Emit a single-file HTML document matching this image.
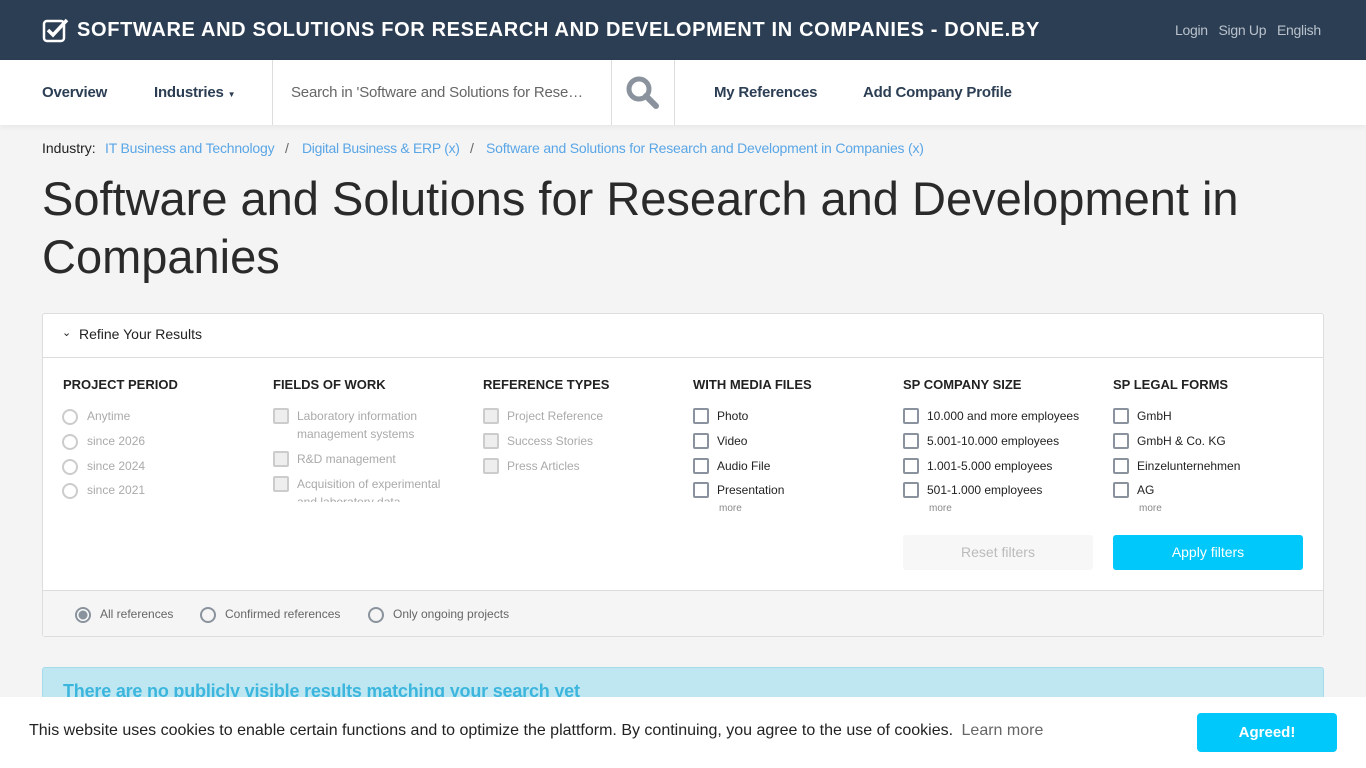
<!DOCTYPE html>
<html><head><meta charset="utf-8"><style>
*{box-sizing:border-box;margin:0;padding:0}
body{width:1366px;height:768px;overflow:hidden;background:#f4f4f4;font-family:"Liberation Sans",sans-serif;position:relative;color:#222}
.a{position:absolute;white-space:nowrap}
#top{position:absolute;left:0;top:0;width:1366px;height:60px;background:#2c3e53}
#nav{position:absolute;left:0;top:60px;width:1366px;height:65px;background:#fff;box-shadow:0 2px 6px rgba(0,0,0,.06)}
.nv{font-size:15px;color:#2c3e53;top:24px;font-weight:bold;letter-spacing:-.2px}
.vl{position:absolute;top:0;width:1px;height:65px;background:#ddd}
.bc{font-size:14px;color:#5aa6e6;top:140px}
#panel{position:absolute;left:42px;top:313px;width:1282px;height:324px;background:#fff;border:1px solid #ddd;border-radius:3px}
.hd{font-size:13px;font-weight:bold;color:#222;top:377px}
.it{font-size:12px;color:#222}
.dis{color:#aaa}
.cb{position:absolute;width:16px;height:16px;border:2px solid #8a939d;border-radius:2px}
.cbd{border-color:#ccc;background:#eee}
.rd{position:absolute;width:16px;height:16px;border:2px solid #ccc;border-radius:50%}
.more{font-size:10px;color:#888}
</style></head><body>
<div id="top"></div>
<svg class="a" style="left:42px;top:17px" width="28" height="26" viewBox="0 0 28 26"><rect x="2" y="4" width="20" height="20" rx="3" fill="none" stroke="#fff" stroke-width="2.5"/><path d="M6 13l5 5L25 3" fill="none" stroke="#fff" stroke-width="3.5"/></svg>
<div class="a" style="left:77px;top:19px;font-size:20px;font-weight:bold;color:#fff;letter-spacing:.65px">SOFTWARE AND SOLUTIONS FOR RESEARCH AND DEVELOPMENT IN COMPANIES - DONE.BY</div>
<div class="a" style="left:1175px;top:22px;font-size:14px;color:#b9c2cc;letter-spacing:-.3px">Login&nbsp;&nbsp;&nbsp;Sign Up&nbsp;&nbsp;&nbsp;English</div>
<div id="nav">
<div class="a nv" style="left:42px">Overview</div>
<div class="a nv" style="left:154px">Industries <span style="font-size:8px">▼</span></div>
<div class="vl" style="left:272px"></div>
<div class="a" style="left:291px;top:24px;font-size:15px;color:#666;letter-spacing:-.2px">Search in 'Software and Solutions for Rese…</div>
<div class="vl" style="left:611px"></div>
<svg class="a" style="left:625px;top:15px" width="36" height="36" viewBox="0 0 36 36"><circle cx="14" cy="14" r="10" fill="none" stroke="#8a939d" stroke-width="5"/><path d="M21 21l10 10" stroke="#8a939d" stroke-width="6" stroke-linecap="round"/></svg>
<div class="vl" style="left:674px"></div>
<div class="a nv" style="left:714px">My References</div>
<div class="a nv" style="left:863px">Add Company Profile</div>
</div>
<div class="a" style="left:42px;top:140px;font-size:14px;color:#222">Industry:</div>
<div class="a bc" style="left:105px;letter-spacing:-.2px">IT Business and Technology</div>
<div class="a" style="left:285px;top:140px;font-size:14px;color:#666">/</div>
<div class="a bc" style="left:302px;letter-spacing:-.3px">Digital Business &amp; ERP (x)</div>
<div class="a" style="left:470px;top:140px;font-size:14px;color:#666">/</div>
<div class="a bc" style="left:486px;letter-spacing:-.2px">Software and Solutions for Research and Development in Companies (x)</div>
<div class="a" style="left:42px;top:170px;font-size:47px;line-height:58px;color:#2a2a2a;white-space:normal;width:1260px">Software and Solutions for Research and Development in Companies</div>
<div id="panel">
<div style="position:absolute;left:0;top:43px;width:1280px;height:1px;background:#ddd"></div>
<div style="position:absolute;left:0;top:276px;width:1280px;height:46px;background:#f5f5f5;border-top:1px solid #ddd"></div>
</div>
<div class="a" style="left:62px;top:326px;font-size:11px">⌄</div>
<div class="a" style="left:79px;top:326px;font-size:14px">Refine Your Results</div>
<div class="a hd" style="left:63px">PROJECT PERIOD</div>
<div class="a hd" style="left:273px">FIELDS OF WORK</div>
<div class="a hd" style="left:483px">REFERENCE TYPES</div>
<div class="a hd" style="left:693px">WITH MEDIA FILES</div>
<div class="a hd" style="left:903px">SP COMPANY SIZE</div>
<div class="a hd" style="left:1113px">SP LEGAL FORMS</div>
<div class="rd" style="left:62px;top:409px"></div><div class="a it dis" style="left:87px;top:409px">Anytime</div>
<div class="rd" style="left:62px;top:434px"></div><div class="a it dis" style="left:87px;top:434px">since 2026</div>
<div class="rd" style="left:62px;top:459px"></div><div class="a it dis" style="left:87px;top:459px">since 2024</div>
<div class="rd" style="left:62px;top:483px"></div><div class="a it dis" style="left:87px;top:483px">since 2021</div>
<div class="cb cbd" style="left:273px;top:408px"></div><div class="a it dis" style="left:297px;top:407px;line-height:18px">Laboratory information<br>management systems</div>
<div class="cb cbd" style="left:273px;top:451px"></div><div class="a it dis" style="left:297px;top:452px">R&amp;D management</div>
<div class="cb cbd" style="left:273px;top:476px"></div><div class="a it dis" style="left:297px;top:475px;height:27px;overflow:hidden;line-height:18px">Acquisition of experimental<br>and laboratory data</div>
<div class="cb cbd" style="left:483px;top:408px"></div><div class="a it dis" style="left:507px;top:409px">Project Reference</div>
<div class="cb cbd" style="left:483px;top:433px"></div><div class="a it dis" style="left:507px;top:434px">Success Stories</div>
<div class="cb cbd" style="left:483px;top:458px"></div><div class="a it dis" style="left:507px;top:459px">Press Articles</div>
<div class="cb" style="left:693px;top:408px"></div><div class="a it" style="left:717px;top:409px">Photo</div>
<div class="cb" style="left:693px;top:433px"></div><div class="a it" style="left:717px;top:434px">Video</div>
<div class="cb" style="left:693px;top:458px"></div><div class="a it" style="left:717px;top:459px">Audio File</div>
<div class="cb" style="left:693px;top:482px"></div><div class="a it" style="left:717px;top:483px">Presentation</div>
<div class="a more" style="left:719px;top:503px">more</div>
<div class="cb" style="left:903px;top:408px"></div><div class="a it" style="left:927px;top:409px">10.000 and more employees</div>
<div class="cb" style="left:903px;top:433px"></div><div class="a it" style="left:927px;top:434px">5.001-10.000 employees</div>
<div class="cb" style="left:903px;top:458px"></div><div class="a it" style="left:927px;top:459px">1.001-5.000 employees</div>
<div class="cb" style="left:903px;top:482px"></div><div class="a it" style="left:927px;top:483px">501-1.000 employees</div>
<div class="a more" style="left:929px;top:503px">more</div>
<div class="cb" style="left:1113px;top:408px"></div><div class="a it" style="left:1137px;top:409px">GmbH</div>
<div class="cb" style="left:1113px;top:433px"></div><div class="a it" style="left:1137px;top:434px">GmbH &amp; Co. KG</div>
<div class="cb" style="left:1113px;top:458px"></div><div class="a it" style="left:1137px;top:459px">Einzelunternehmen</div>
<div class="cb" style="left:1113px;top:482px"></div><div class="a it" style="left:1137px;top:483px">AG</div>
<div class="a more" style="left:1139px;top:503px">more</div>
<div class="a" style="left:903px;top:535px;width:190px;height:35px;background:#f7f7f7;border-radius:3px;color:#bbb;font-size:14px;text-align:center;line-height:35px">Reset filters</div>
<div class="a" style="left:1113px;top:535px;width:190px;height:35px;background:#00c8fa;border-radius:3px;color:#fff;font-size:14px;text-align:center;line-height:35px">Apply filters</div>
<div class="rd" style="left:75px;top:607px;border-color:#8a939d;background:radial-gradient(circle,#8a939d 4px,#fff 5px)"></div><div class="a" style="left:100px;top:607px;font-size:12px;color:#666">All references</div>
<div class="rd" style="left:200px;top:607px;border-color:#8a939d"></div><div class="a" style="left:225px;top:607px;font-size:12px;color:#666">Confirmed references</div>
<div class="rd" style="left:368px;top:607px;border-color:#8a939d"></div><div class="a" style="left:393px;top:607px;font-size:12px;color:#666">Only ongoing projects</div>
<div class="a" style="left:42px;top:667px;width:1282px;height:60px;background:#bfe7f2;border:1px solid #a6dbeb;border-radius:3px"></div>
<div class="a" style="left:63px;top:681px;font-size:18px;font-weight:bold;color:#3cb6dd;letter-spacing:-.2px">There are no publicly visible results matching your search yet</div>
<div class="a" style="left:0;top:697px;width:1366px;height:71px;background:#fff"></div>
<div class="a" style="left:29px;top:722px;font-size:16px;color:#222">This website uses cookies to enable certain functions and to optimize the plattform. By continuing, you agree to the use of cookies. <span style="color:#666;margin-left:4px">Learn more</span></div>
<div class="a" style="left:1197px;top:713px;width:140px;height:39px;background:#00c8fa;border-radius:4px;color:#fff;font-weight:bold;font-size:15px;text-align:center;line-height:39px">Agreed!</div>
</body></html>
